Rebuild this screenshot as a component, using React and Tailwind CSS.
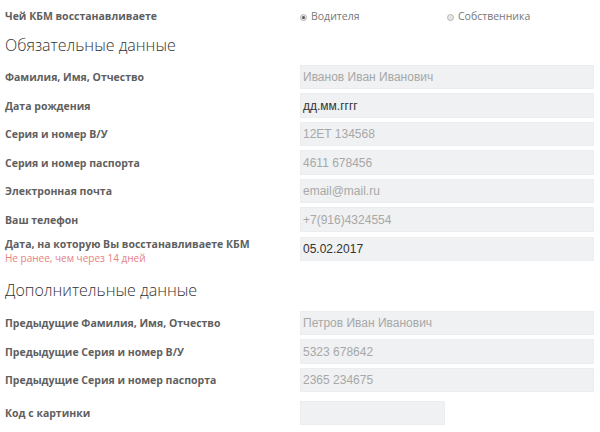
import React from 'react';

const mainRows = [
  { label: 'Фамилия, Имя, Отчество', value: 'Иванов Иван Иванович' },
  { label: 'Дата рождения', value: 'дд.мм.гггг', dark: true },
  { label: 'Серия и номер В/У', value: '12ET 134568' },
  { label: 'Серия и номер паспорта', value: '4611 678456' },
  { label: 'Электронная почта', value: 'email@mail.ru' },
  { label: 'Ваш телефон', value: '+7(916)4324554' },
];

const extraRows = [
  { label: 'Предыдущие Фамилия, Имя, Отчество', value: 'Петров Иван Иванович' },
  { label: 'Предыдущие Серия и номер В/У', value: '5323 678642' },
  { label: 'Предыдущие Серия и номер паспорта', value: '2365 234675' },
];

const Field = ({ value, dark, className = 'w-[294px]' }) => (
  <div
    className={`h-[24.5px] ${className} bg-[#eff1f2] border border-[#ebedee] flex items-center pl-[2px] text-[12px] font-['Liberation_Sans',Arial,sans-serif] ${
      dark ? 'text-[#333]' : 'text-[#a8a8a8]'
    }`}
  >
    {value}
  </div>
);

const Row = ({ label, children }) => (
  <div className="h-[28.5px] flex items-center">
    <div className="w-[300px] pl-[5px] pt-[2px] text-[10.5px] font-bold text-[#5f5f5f]">{label}</div>
    {children}
  </div>
);

const Radio = ({ checked, label }) => (
  <label className="flex items-center gap-[4px] text-[10.5px] text-[#777]">
    <span className="w-[7px] h-[7px] rounded-full border border-[#b5b5b5] bg-[#e6e6e6] flex items-center justify-center">
      {checked && <span className="w-[3px] h-[3px] rounded-full bg-[#555]" />}
    </span>
    {label}
  </label>
);

const Heading = ({ children, className = '' }) => (
  <h2 className={`h-[24px] flex items-center pl-[5px] text-[16px] font-light text-[#333] ${className}`}>
    {children}
  </h2>
);

export default function App() {
  return (
    <div className="w-[600px] h-[432px] bg-white overflow-hidden pt-[5px] font-['Open_Sans',sans-serif]">
      {/* Чей КБМ */}
      <div className="h-[24px] flex items-center">
        <div className="w-[300px] pl-[5px] text-[10.5px] font-bold text-[#5f5f5f]">Чей КБМ восстанавливаете</div>
        <div className="w-[147px]">
          <Radio checked label="Водителя" />
        </div>
        <Radio label="Собственника" />
      </div>

      <Heading className="mt-[4px]">Обязательные данные</Heading>

      <div className="mt-[5.75px]">
        {mainRows.map((r) => (
          <Row key={r.label} label={r.label}>
            <Field value={r.value} dark={r.dark} />
          </Row>
        ))}
        <div className="h-[28.5px] flex items-center mt-[1px]">
          <div className="w-[300px] pl-[5px] pt-[3px] leading-[14px]">
            <div className="text-[10.5px] font-bold text-[#5f5f5f]">Дата, на которую Вы восстанавливаете КБМ</div>
            <div className="text-[10px] text-[#e57f7f]">Не ранее, чем через 14 дней</div>
          </div>
          <Field value="05.02.2017" dark />
        </div>
      </div>

      <Heading className="mt-[15px]">Дополнительные данные</Heading>

      <div className="mt-[6.5px]">
        {extraRows.map((r) => (
          <Row key={r.label} label={r.label}>
            <Field value={r.value} />
          </Row>
        ))}
        <div className="mt-[4.5px]">
          <Row label="Код с картинки">
            <Field value="" className="w-[145px]" />
          </Row>
        </div>
      </div>
    </div>
  );
}
